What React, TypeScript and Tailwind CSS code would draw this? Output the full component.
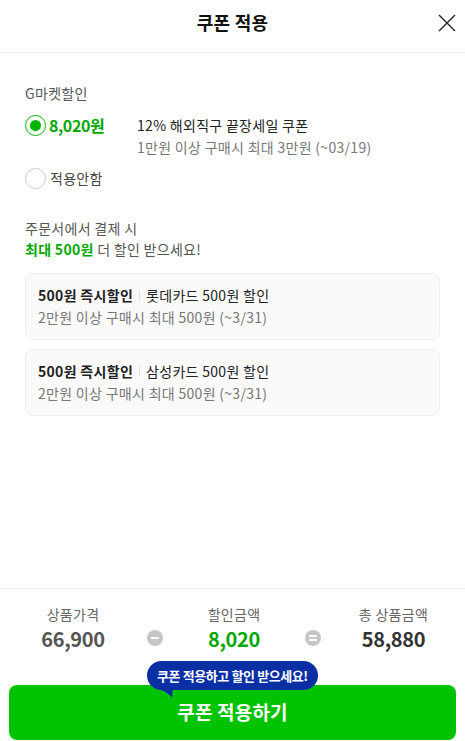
import React, { useState } from 'react';

type CardCoupon = {
  title: string;
  card: string;
  desc: string;
};

const cardCoupons: CardCoupon[] = [
  { title: '500원 즉시할인', card: '롯데카드 500원 할인', desc: '2만원 이상 구매시 최대 500원 (~3/31)' },
  { title: '500원 즉시할인', card: '삼성카드 500원 할인', desc: '2만원 이상 구매시 최대 500원 (~3/31)' },
];

const Radio: React.FC<{ checked: boolean }> = ({ checked }) => (
  <span
    className={
      checked
        ? 'flex h-[21px] w-[21px] shrink-0 items-center justify-center rounded-full border-[1.5px] border-[#00b400] bg-white'
        : 'flex h-[21px] w-[21px] shrink-0 items-center justify-center rounded-full border border-[#c8c8c8] bg-white'
    }
  >
    {checked && <span className="h-[11px] w-[11px] rounded-full bg-[#00b400]" />}
  </span>
);

const OperatorDot: React.FC<{ sign: 'minus' | 'equal' }> = ({ sign }) => (
  <div className="flex justify-center pt-[26px]">
    <span className="flex h-4 w-4 items-center justify-center rounded-full bg-[#c6c6c6]">
      {sign === 'minus' ? (
        <span className="h-[2px] w-[8px] bg-white" />
      ) : (
        <span className="flex flex-col gap-[2px]">
          <span className="h-[2px] w-[8px] bg-white" />
          <span className="h-[2px] w-[8px] bg-white" />
        </span>
      )}
    </span>
  </div>
);

const App: React.FC = () => {
  const [selected, setSelected] = useState<'coupon' | 'none'>('coupon');

  return (
    <div
      className="flex h-[741px] w-[465px] flex-col bg-white text-[#222]"
      style={{ fontFamily: '"Noto Sans CJK KR", "Noto Sans", sans-serif' }}
    >
      {/* Header */}
      <header className="relative flex h-[53px] shrink-0 items-center justify-center border-b border-[#eeeeee]">
        <h1 className="-mt-[8px] text-[18px] font-bold leading-none tracking-[0.2px] text-[#111]">쿠폰 적용</h1>
        <button className="absolute right-[7px] top-[12px] p-[1px]" aria-label="닫기">
          <svg width="20" height="20" viewBox="0 0 20 20" fill="none">
            <path d="M2 2 L18 18 M18 2 L2 18" stroke="#222" strokeWidth="1.4" />
          </svg>
        </button>
      </header>

      {/* Body */}
      <main className="flex-1 px-[25px] pt-[30px] tracking-[0.3px]">
        <p className="text-[14px] leading-[20px] text-[#555]">G마켓할인</p>

        <div className="mt-[11px] flex items-start" onClick={() => setSelected('coupon')}>
          <div className="flex w-[112px] items-center gap-[3px] pt-[1px]">
            <Radio checked={selected === 'coupon'} />
            <span className="text-[16px] font-bold leading-[21px] tracking-[-0.4px] text-[#00a800]">8,020원</span>
          </div>
          <div>
            <p className="text-[14px] leading-[22px] text-[#222]">12% 해외직구 끝장세일 쿠폰</p>
            <p className="text-[14px] leading-[22px] text-[#777]">1만원 이상 구매시 최대 3만원 (~03/19)</p>
          </div>
        </div>

        <div className="mt-[9px] flex items-center gap-[4px]" onClick={() => setSelected('none')}>
          <Radio checked={selected === 'none'} />
          <span className="text-[14px] leading-[22px] text-[#444]">적용안함</span>
        </div>

        <div className="mt-[29px]">
          <p className="text-[14px] leading-[21px] text-[#555]">주문서에서 결제 시</p>
          <p className="text-[14px] leading-[21px] text-[#555]">
            <span className="font-bold text-[#00a800]">최대 500원</span> 더 할인 받으세요!
          </p>
        </div>

        <div className="mt-[13px] flex flex-col gap-[9px]">
          {cardCoupons.map((c) => (
            <div
              key={c.card}
              className="rounded-[8px] border border-[#eeeeee] bg-[#fafafa] px-[12px] pt-[10px] pb-[11px]"
            >
              <p className="flex items-center text-[14px] leading-[22px] text-[#222]">
                <span className="font-bold">{c.title}</span>
                <span className="mx-[6px] h-[11px] w-px bg-[#e2e2e2]" />
                <span>{c.card}</span>
              </p>
              <p className="text-[14px] leading-[22px] text-[#777]">{c.desc}</p>
            </div>
          ))}
        </div>
      </main>

      {/* Footer */}
      <footer className="shrink-0 border-t border-[#eeeeee] pt-[15px] pb-[1px]">
        <div className="grid grid-cols-[146px_18px_140px_18px_1fr]">
          <div className="flex flex-col items-center">
            <span className="text-[14px] leading-[20px] tracking-[0.3px] text-[#666]">상품가격</span>
            <span className="mt-[2px] text-[20px] font-bold leading-[26px] tracking-[-0.3px] text-[#555]">66,900</span>
          </div>
          <OperatorDot sign="minus" />
          <div className="flex flex-col items-center">
            <span className="text-[14px] leading-[20px] tracking-[0.3px] text-[#666]">할인금액</span>
            <span className="mt-[2px] text-[20px] font-bold leading-[26px] tracking-[-0.3px] text-[#00a800]">8,020</span>
          </div>
          <OperatorDot sign="equal" />
          <div className="flex flex-col items-center">
            <span className="text-[14px] leading-[20px] tracking-[0.3px] text-[#666]">총 상품금액</span>
            <span className="mt-[2px] text-[20px] font-bold leading-[26px] tracking-[-0.3px] text-[#333]">58,880</span>
          </div>
        </div>

        <div className="relative mx-[9px] mt-[33px]">
          <button className="flex h-[55px] w-full items-center justify-center rounded-[8px] bg-[#00c300] text-[19px] font-bold tracking-[0.2px] text-white">
            쿠폰 적용하기
          </button>

          {/* Tooltip bubble */}
          <div className="absolute left-[138px] top-[-24px]">
            <div className="relative flex h-[29px] items-center rounded-full bg-[#0a2ea4] px-[10px] text-[13px] font-bold tracking-[-0.4px] text-white">
              쿠폰 적용하고 할인 받으세요!
            </div>
            <svg className="absolute left-[14px] top-[24px]" width="14" height="14" viewBox="0 0 14 14">
              <path d="M0 0 L12 0 L11 13 C8 9 5 7 0 5 Z" fill="#0a2ea4" />
            </svg>
          </div>
        </div>
      </footer>
    </div>
  );
};

export default App;
